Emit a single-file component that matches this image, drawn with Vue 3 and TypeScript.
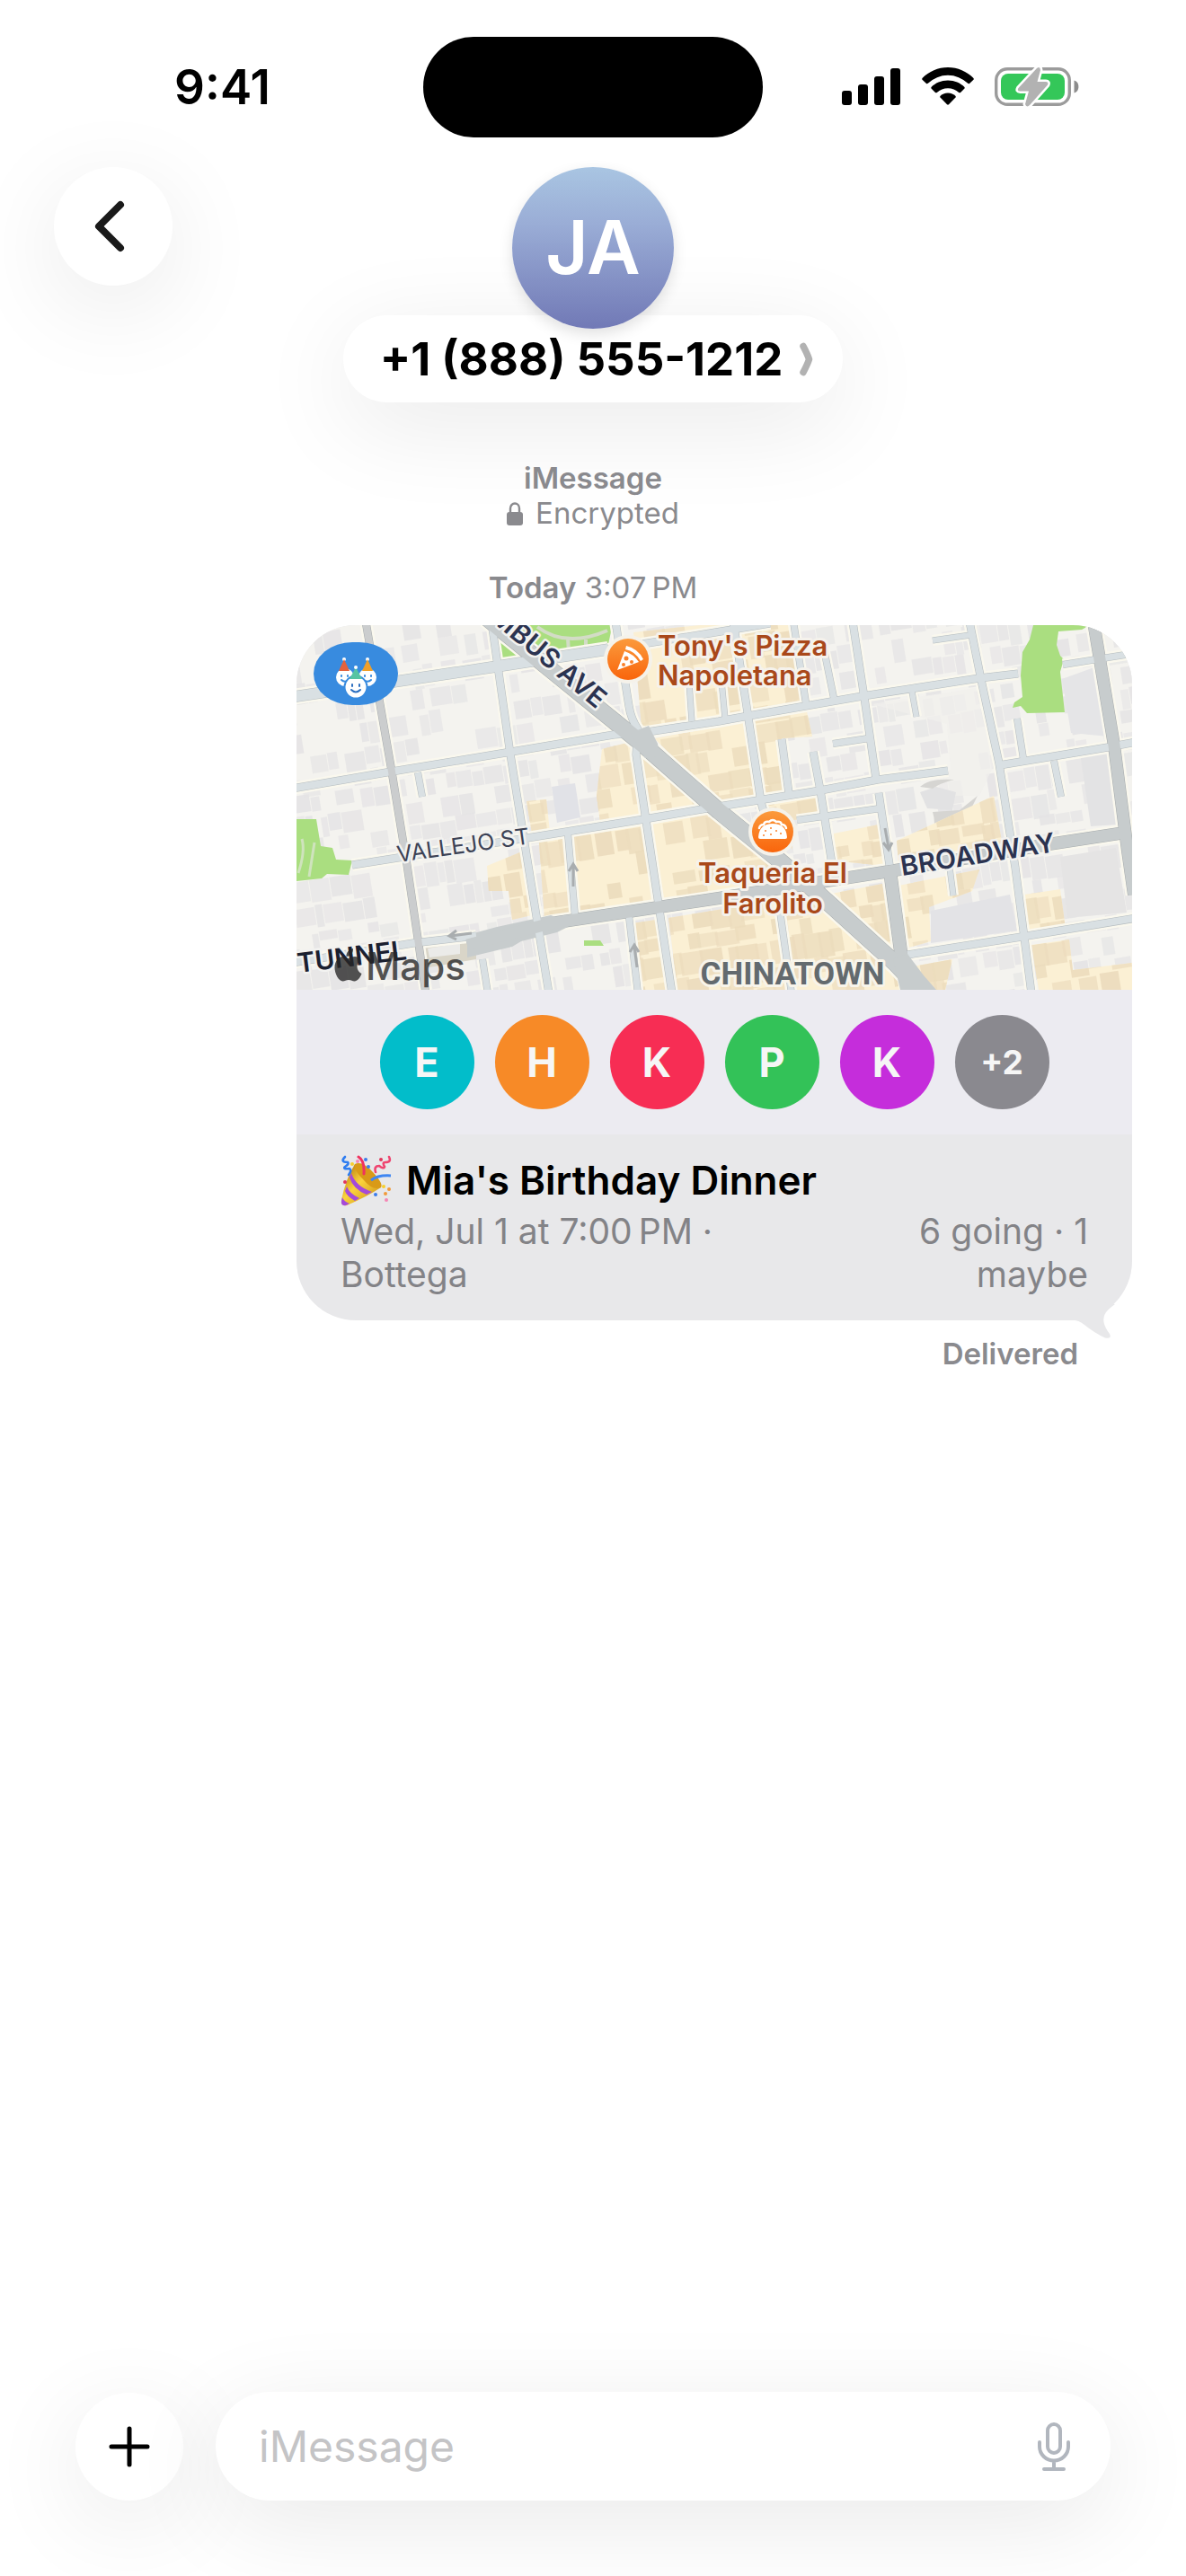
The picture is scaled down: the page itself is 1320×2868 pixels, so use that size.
<script setup lang="ts">
interface Guest {
  label: string
  color: string
  more?: boolean
}

interface Road {
  d: string
  w: number
  tone: 'light' | 'mid' | 'main'
}

interface Lot {
  x: number
  y: number
  w: number
  h: number
  shade: number
}

const guests: Guest[] = [
  { label: 'E', color: '#02bdca' },
  { label: 'H', color: '#f78a27' },
  { label: 'K', color: '#f72d54' },
  { label: 'P', color: '#33c258' },
  { label: 'K', color: '#c52ddb' },
  { label: '+2', color: '#8a898f', more: true },
]

const roads: Road[] = [
  { d: 'M347 27 L460 9 L527 -2', w: 8, tone: 'light' },
  { d: 'M-5 182 L100 164 L233 142 L353 122 L390 119 L470 107 L503 101 L630 79 L760 59 L803 54', w: 8, tone: 'light' },
  { d: 'M853 44 L935 31', w: 7, tone: 'light' },
  { d: 'M62 267 L113 259 L263 236 L387 216 L457 204 L520 194 L583 184 L647 172 L725 162', w: 8, tone: 'light' },
  { d: 'M782 156 L903 136 L935 130', w: 8, tone: 'light' },
  { d: 'M-5 376 L130 354 L200 346', w: 8, tone: 'light' },
  { d: 'M597 132 L637 126', w: 7, tone: 'light' },
  { d: 'M557 217 L650 204', w: 7, tone: 'light' },
  { d: 'M680 367 L807 347 L935 326', w: 8, tone: 'light' },
  { d: 'M708 17 L750 11', w: 6, tone: 'light' },
  { d: 'M217 -4 L238 144 L267 324 L281 410', w: 8, tone: 'light' },
  { d: 'M355 -4 L370 90 Q372 104 380 116 L378 144 L403 311 L418 410', w: 8, tone: 'light' },
  { d: 'M437 64 L440 107', w: 6, tone: 'light' },
  { d: 'M473 62 L477 104', w: 6, tone: 'light' },
  { d: 'M486 -4 L500 84 L517 197 L522 215', w: 8, tone: 'light' },
  { d: 'M553 -4 L567 87', w: 7, tone: 'light' },
  { d: 'M587 27 L598 81', w: 7, tone: 'light' },
  { d: 'M619 -4 L632 81 L645 171', w: 8, tone: 'light' },
  { d: 'M540 127 L548 187', w: 8, tone: 'light' },
  { d: 'M575 141 L583 184 L596 266', w: 8, tone: 'light' },
  { d: 'M648 187 L660 267', w: 8, tone: 'light' },
  { d: 'M749 -4 L762 61 L782 154 L800 270 L818 410', w: 8, tone: 'light' },
  { d: 'M685 74 L690 102', w: 6, tone: 'light' },
  { d: 'M802 104 L809 149', w: 7, tone: 'light' },
  { d: 'M843 151 L851 191', w: 7, tone: 'light' },
  { d: 'M727 270 L731 301', w: 6, tone: 'light' },
  { d: 'M135 164 L140 191', w: 7, tone: 'light' },
  { d: 'M302 232 L310 324', w: 7, tone: 'light' },
  { d: 'M370 324 L380 410', w: 7, tone: 'light' },
  { d: 'M207 372 L213 410', w: 7, tone: 'light' },
  { d: 'M538 318 L551 410', w: 7, tone: 'light' },
  { d: 'M-5 80 L223 46 L347 27', w: 12, tone: 'light' },
  { d: 'M77 -4 L105 157 L123 267 L144 410', w: 8, tone: 'mid' },
  { d: 'M190 356 L283 332 L403 314 L470 304 L577 287 L660 274 L837 244 L922 231', w: 13, tone: 'main' },
  { d: 'M660 270 L673 367 L682 410', w: 14, tone: 'main' },
  { d: 'M887 -4 L910 134 L925 251 L932 300', w: 13, tone: 'main' },
  { d: 'M212 -8 L387 134 L470 207 L535 260 L583 301 L667 377 L700 412', w: 18, tone: 'main' },
]

const commercial: string[] = [
  '375,8 486,-4 500,96 384,114',
  '494,4 550,-4 564,84 506,94',
  '398,126 498,108 513,192 474,200',
  '508,106 568,96 574,124 540,126 546,186 522,190',
  '340,138 372,130 384,212 338,220 334,190',
  '256,196 278,194 282,230 262,232',
  '270,242 388,222 400,308 276,328',
  '384,148 452,198 393,212',
  '393,222 458,210 570,284 408,308',
  '524,200 578,190 582,212 548,218 552,250',
  '596,262 598,232 648,222 654,268',
  '212,268 256,250 266,322 240,328 236,296 214,296',
  '374,332 400,328 414,406 384,406',
  '414,326 572,300 668,384 676,406 424,406',
  '590,300 652,288 664,366',
  '668,240 776,190 786,246 670,266',
  '670,290 760,272 752,296 704,314 706,352 678,360',
  '810,300 850,294 856,338 814,344',
  '686,380 730,372 722,406 700,406',
  '818,356 860,350 864,384 930,376 930,406 826,406',
]

const noise = (n: number): number => {
  const v = Math.sin(n * 91.17) * 4375.85
  return v - Math.floor(v)
}

const lots: Lot[] = []
let seed = 1
for (let y = -20; y < 580; ) {
  const rowHeight = 16 + Math.round(noise(seed++) * 12)
  for (let x = -90; x < 940; ) {
    const w = 8 + Math.round(noise(seed++) * 16)
    const keep = noise(seed++)
    if (keep > 0.3) {
      lots.push({
        x,
        y: y + Math.round(noise(seed++) * 5),
        w: w - 1,
        h: rowHeight - Math.round(noise(seed++) * 6),
        shade: 0.45 + Math.round(keep * 50) / 100,
      })
    }
    x += w + (noise(seed++) > 0.8 ? 7 : 0)
  }
  y += rowHeight + 2
}
</script>

<template>
  <div class="screen">
    <div class="status">
      <div class="status-time">9:41</div>
      <div class="island"></div>
      <div class="status-icons">
        <svg width="66" height="44" viewBox="0 0 66 44" aria-hidden="true">
          <rect x="0" y="26" width="11" height="16" rx="3" />
          <rect x="18" y="19" width="11" height="23" rx="3" />
          <rect x="36" y="10" width="11" height="32" rx="3" />
          <rect x="54" y="1" width="11" height="41" rx="3" />
        </svg>
        <svg width="58" height="44" viewBox="0 0 58 44" aria-hidden="true">
          <path d="M29 0 C40 0 50 4.500 57.500 12 Q58 13 57.500 13.700 L53 18 Q52 18.500 51.200 17.800 A32 32 0 0 0 6.800 17.800 Q6 18.500 5 18 L.5 13.700 Q0 13 .5 12 C8 4.500 18 0 29 0Z" />
          <path d="M29 14.500 C36.500 14.500 43 17.400 47.500 22 Q48 23 47.500 23.600 L43 28 Q42 28.600 41.200 27.900 A18 18 0 0 0 16.800 27.900 Q16 28.600 15 28 L10.500 23.600 Q10 23 10.500 22 C15 17.400 21.500 14.500 29 14.500Z" />
          <path d="M29 28.500 C32.500 28.500 35.500 29.800 37.600 32 Q38 32.800 37.500 33.400 L30 41.300 Q29 42.200 28 41.300 L20.500 33.400 Q20 32.800 20.400 32 C22.500 29.800 25.500 28.500 29 28.500Z" />
        </svg>
        <svg width="94" height="46" viewBox="0 0 94 46" aria-hidden="true">
          <rect x="1.700" y="2.700" width="81.600" height="39.600" rx="12.500" fill="none" stroke="#9b9b9b" stroke-width="3.400" />
          <rect x="7" y="8" width="71" height="29" rx="8" fill="#34c759" />
          <path d="M88.500 15.500 C95 17 95 28 88.500 29.500Z" fill="#8c8c8c" />
          <path
            d="M47 2 L26.500 24 Q24.500 27.500 28.500 27.500 L38 27.500 L34 42 Q35.500 46.500 39.500 42.500 L59 20.500 Q60.500 17 57 17 L47.500 17 L51 4 Q50.500 -.5 47 2Z"
            fill="#b2b2b2"
            stroke="#fff"
            stroke-width="5"
            stroke-linejoin="round"
            paint-order="stroke"
          />
        </svg>
      </div>
    </div>

    <header class="header">
      <button class="round back" type="button" aria-label="Back">
        <svg width="34" height="58" viewBox="0 0 34 58" fill="none" stroke="#1a1a1a" stroke-width="8" stroke-linecap="round" stroke-linejoin="round" aria-hidden="true">
          <path d="M29 5 L5 29 L29 53" />
        </svg>
      </button>
      <div class="contact">
        <div class="avatar">JA</div>
        <button class="contact-pill" type="button">
          <span>+1 (888) 555-1212</span>
          <svg width="15" height="38" viewBox="0 0 15 38" fill="none" stroke="#b2b2b2" stroke-width="7.500" stroke-linecap="round" stroke-linejoin="round" aria-hidden="true">
            <path d="M4 4.500 Q9 14 10.500 19 Q9 24 4 33.500" />
          </svg>
        </button>
      </div>
    </header>

    <main class="thread">
      <div class="notice">
        <div class="strong">iMessage</div>
        <div class="encrypted">
          <svg width="18" height="26" viewBox="0 0 18 26" aria-hidden="true">
            <path d="M4 12 V7 A5 5.500 0 0 1 14 7 V12" fill="none" stroke="#8a8a8e" stroke-width="2.400" />
            <rect x="0" y="11" width="18" height="15" rx="3" fill="#8a8a8e" />
          </svg>
          <span>Encrypted</span>
        </div>
      </div>
      <div class="stamp"><span class="strong">Today</span> 3:07&#8239;PM</div>

      <article class="bubble">
        <div class="card">
          <svg class="map" viewBox="0 0 930 406" preserveAspectRatio="xMidYMid slice" role="img" aria-label="Map">
            <defs>
              <clipPath id="commercial-area">
                <polygon v-for="(p, i) in commercial" :key="i" :points="p" />
              </clipPath>
              <linearGradient id="pin-fill" x1="0" y1="0" x2="0" y2="1">
                <stop offset="0" stop-color="#fb9a3c" />
                <stop offset="1" stop-color="#f9650c" />
              </linearGradient>
            </defs>
            <rect width="930" height="406" fill="#f4f3ef" />
            <g transform="rotate(-9)" fill="#e5e4e5">
              <rect v-for="(l, i) in lots" :key="i" :x="l.x" :y="l.y" :width="l.w" :height="l.h" :opacity="l.shade" />
            </g>
            <path d="M640 88 L756 70 L776 156 L760 190 L700 190 L728 160 L724 110Z" fill="#f1f0ed" opacity=".7" />
            <polygon points="284,180 310,176 316,214 290,220" fill="#e1e2e7" />
            <polygon points="706,318 794,300 802,340 706,354" fill="#e3e3e6" />
            <polygon points="872,142 902,138 914,222 884,224" fill="#e3e3e4" />
            <polygon points="852,60 896,44 904,124 862,120" fill="#e5e5e7" />
            <polygon points="850,258 912,248 924,320 858,326" fill="#e5e4e4" />
            <polygon points="694,186 712,180 734,186 730,206 702,204" fill="#e2e2e3" />
            <path d="M694 180 Q704 170 732 172 Q716 176 708 182Z M708 208 L738 206 L758 190 L750 206 Q726 220 716 238 L708 236 Q712 220 708 208Z" fill="#d6d5d2" />

            <polygon v-for="(p, i) in commercial" :key="'c' + i" :points="p" fill="#fbf0d4" />
            <g clip-path="url(#commercial-area)">
              <g transform="rotate(-9)" fill="#ecdcbd">
                <rect v-for="(l, i) in lots" :key="i" :x="l.x - 4" :y="l.y - 3" :width="l.w + 4" :height="l.h + 2" :opacity="l.shade" />
              </g>
            </g>

            <g fill="#aade80">
              <polygon points="220,-2 352,-2 346,26 224,40" />
              <polygon points="0,216 22,216 27,246 40,248 44,261 62,262 58,278 34,277 28,282 0,285" />
              <polygon points="820,0 883,0 874,5 848,7 846,22 850,34 854,38 850,52 855,97 813,98 806,90 797,92 799,86 808,80 806,56 808,30 816,16" />
              <polygon points="320,351 338,351 342,357 320,357" />
            </g>
            <path d="M268 2 Q300 26 346 6 M302 14 L303 32 M322 16 L322 30" fill="none" stroke="#d3dcc6" stroke-width="4" />
            <path d="M2 276 Q10 252 6 238 M14 280 L20 242" fill="none" stroke="#cfe3bd" stroke-width="3" />

            <polygon points="138,358 200,348 200,372 142,382" fill="#d9d5c8" />
            <polygon points="146,360 182,354 182,366 148,370" fill="#ebebe9" />

            <g fill="none" stroke-linejoin="round">
              <path v-for="(r, i) in roads" :key="'m' + i" :d="r.d" :stroke-width="r.w + 6" stroke="#faf8ee" />
              <path v-for="(r, i) in roads" :key="'e' + i" :d="r.d" :stroke-width="r.w + 1" :class="['edge', r.tone]" />
              <polygon points="190,345 223,336 283,323 292,326 300,322 302,336 290,342 250,352 240,358 190,370" fill="#c7cccd" stroke="none" />
              <path v-for="(r, i) in roads" :key="'f' + i" :d="r.d" :stroke-width="r.w" :class="['road', r.tone]" />
              <path d="M372 120 L392 112 L402 132 L404 146 L388 148Z M664 372 L680 366 L698 390 L712 406 L672 406Z" class="junction" />
            </g>

            <g fill="none" stroke="#a9adaf" stroke-width="3">
              <path d="M308 291 V267 M303 274 L308 266 L313 274" />
              <path d="M379 381 L376 358 M371 364 L376 356 L381 364" />
              <path d="M195 343 L171 346 M178 340 L170 346 L178 350" />
              <path d="M655 226 L659 248 M653 242 L659 250 L663 242" />
            </g>

            <g class="street">
              <text transform="translate(113 264) rotate(-8)" class="minor">VALLEJO ST</text>
              <text transform="translate(334 94) rotate(40)" text-anchor="end">COLUMBUS AVE</text>
              <text transform="translate(674 279) rotate(-9)">BROADWAY</text>
              <text transform="translate(2 387) rotate(-7)" class="ink">TUNNEL</text>
            </g>
            <text class="district" x="552" y="400" text-anchor="middle">CHINATOWN</text>

            <g class="place">
              <text x="402" y="34">Tony's Pizza</text>
              <text x="402" y="67">Napoletana</text>
              <text x="530" y="287" text-anchor="middle">Taqueria El</text>
              <text x="530" y="321" text-anchor="middle">Farolito</text>
            </g>

            <circle cx="369" cy="38" r="27" fill="#f5f2ea" />
            <circle cx="369" cy="38" r="23" fill="url(#pin-fill)" />
            <path d="M367 23 Q380 26 386 38 L383 40 Q377 29 366 27Z M365 29 Q375 32 381 41 L357 50Z" fill="#fff" />
            <g fill="#f9802a">
              <circle cx="367" cy="37" r="2.500" />
              <circle cx="373" cy="41" r="2" />
              <circle cx="364" cy="44" r="2" />
            </g>
            <circle cx="530" cy="230" r="27" fill="#f5f2ea" />
            <circle cx="530" cy="230" r="23" fill="url(#pin-fill)" />
            <path d="M514 236 Q515 221 530 221 Q545 221 546 236 Q546 238 544 238 H516 Q514 238 514 236Z" fill="#fff" />
            <g fill="none" stroke="#fff" stroke-width="2.500" stroke-linecap="round">
              <path d="M515 226 Q516 222 520 222 Q521 218 526 219 Q530 215 534 219 Q539 218 540 222 Q544 222 545 226" />
            </g>
            <g fill="#f9802a">
              <circle cx="522" cy="229" r="1" />
              <circle cx="528" cy="226" r="1" />
              <circle cx="534" cy="229" r="1" />
              <circle cx="528" cy="233" r="1" />
              <circle cx="539" cy="232" r="1" />
              <circle cx="520" cy="234" r="1" />
            </g>

            <g opacity=".78">
              <path
                d="M63 360 C63.500 365 60 369 55.500 369 C55 364.500 59 360.500 63 360Z M57.500 371 C59.500 371 61.500 369 65 369 C67.500 369 70 370.500 71.500 373 C65.500 377 66.500 385 72.500 388 C71 392.500 67.500 396.500 64.500 396.500 C62 396.500 61.200 395 58 395 C55 395 54 396.500 51.500 396.500 C47 396.500 42.500 388 42.500 381 C42.500 374 47 369 51.500 369 C54.500 369 56 371 57.500 371Z"
                fill="#262626"
              />
              <text class="maps-mark" x="77" y="395">Maps</text>
            </g>

            <rect x="19" y="19" width="94" height="70" rx="43" ry="35" fill="#388bdf" />
            <g fill="#fff">
              <circle cx="54" cy="58" r="10" />
              <circle cx="79" cy="58" r="10" />
              <circle cx="53" cy="38" r="2" />
              <circle cx="79" cy="38" r="2" />
            </g>
            <path d="M53 38 L59 51 H47Z" fill="#e4623c" />
            <path d="M79 38 L85 51 H73Z" fill="#efa02b" />
            <g fill="none" stroke="#388bdf" stroke-width="2" stroke-linecap="round">
              <path d="M50 56 V57 M57 56 V57 M50 61 Q53 64 57 62 M76 56 V57 M83 56 V57 M76 62 Q80 64 83 61" />
            </g>
            <circle cx="66" cy="69" r="12.500" fill="#fff" stroke="#388bdf" stroke-width="2" />
            <path d="M66 47 L73 60 H59Z" fill="#55c4a2" />
            <circle cx="66" cy="47" r="2" fill="#fff" />
            <path d="M62 66 V68 M70 66 V68 M61 72 Q66 77 71 72" fill="none" stroke="#2c6fc0" stroke-width="2" stroke-linecap="round" />
          </svg>

          <ul class="guests">
            <li v-for="(g, i) in guests" :key="i" :class="{ more: g.more }" :style="{ background: g.color }">{{ g.label }}</li>
          </ul>

          <div class="info">
            <h2 class="title">
              <svg width="57" height="57" viewBox="0 0 57 57" role="img" aria-label="Party popper">
                <defs>
                  <linearGradient id="cone" x1="0" y1="0" x2="1" y2="1">
                    <stop offset=".1" stop-color="#b97c10" />
                    <stop offset=".45" stop-color="#fbd33c" />
                    <stop offset="1" stop-color="#c78a12" />
                  </linearGradient>
                </defs>
                <path d="M16 10 Q30 16 45 36 Q30 46 7 56 Q0 57 1 50 Q6 26 16 10Z" fill="url(#cone)" />
                <path d="M16 10 Q24 6 36 19 Q48 32 45 36 Q36 40 26 28 Q14 16 16 10Z" fill="#d99a17" />
                <path d="M12 20 Q17 35 35 41 L29 44 Q14 38 10 25Z M7 35 Q10 43 21 48 L16 51 Q7 46 5 40Z" fill="#a54bd8" />
                <path d="M2 47 Q4 52 10 54 L6 56 Q0 57 1 51Z" fill="#a54bd8" />
                <path d="M5 2 Q-1 8 8 8 Q10 10 5 13 Q2 16 10 15 Q13 17 9 22" fill="none" stroke="#2f7df0" stroke-width="2.600" stroke-linecap="round" />
                <path d="M34 28 Q42 22 56 23" fill="none" stroke="#3f86f2" stroke-width="3" />
                <path d="M20 2 Q27 6 26 21" fill="none" stroke="#f0325f" stroke-width="3" stroke-linecap="round" />
                <path d="M54 2 Q57 8 50 8 Q46 8 49 13 Q48 16 43 12 Q37 12 39 19" fill="none" stroke="#ef4570" stroke-width="2.600" stroke-linecap="round" />
                <g fill="#f587b5">
                  <circle cx="19" cy="7" r="2" />
                  <circle cx="51" cy="50" r="2" />
                </g>
                <g fill="#3b7bea">
                  <circle cx="28" cy="5" r="2" />
                  <circle cx="31" cy="13" r="2" />
                  <circle cx="39" cy="44" r="2" />
                </g>
                <g fill="#f7cf2d">
                  <circle cx="13" cy="10" r="2" />
                  <circle cx="48" cy="35" r="2" />
                </g>
                <g fill="#f19a3a">
                  <circle cx="54" cy="38" r="2" />
                  <circle cx="50" cy="43" r="2" />
                </g>
                <g fill="#e2365b">
                  <circle cx="5" cy="30" r="2" />
                  <circle cx="45" cy="5" r="2" />
                </g>
              </svg>
              <span>Mia's Birthday Dinner</span>
            </h2>
            <div class="meta">
              <p class="when">Wed, Jul 1 at 7:00&#8239;PM · Bottega</p>
              <p class="count">6 going · 1 maybe</p>
            </div>
          </div>
        </div>
        <svg class="tail" width="70" height="60" viewBox="0 0 70 60" aria-hidden="true">
          <path d="M10 30 Q20 29 27 35 Q38 44 50 49.500 Q58 51 55 45 Q44 31 51 21 Q54 17 61 12 L20 5Z" fill="#e8e8ea" />
        </svg>
      </article>
      <div class="receipt strong">Delivered</div>
    </main>

    <form class="composer" @submit.prevent>
      <button class="round add" type="button" aria-label="Add">
        <svg width="46" height="46" viewBox="0 0 46 46" stroke="#000" stroke-width="5" stroke-linecap="round" aria-hidden="true">
          <path d="M23 3 V43 M3 23 H43" />
        </svg>
      </button>
      <div class="field">
        <input type="text" placeholder="iMessage" aria-label="iMessage" />
        <button class="mic" type="button" aria-label="Dictate">
          <svg width="36" height="54" viewBox="0 0 36 54" fill="none" stroke="#b1b6be" stroke-width="4" stroke-linecap="round" aria-hidden="true">
            <rect x="11" y="2" width="14" height="32" rx="7" />
            <path d="M2 22 V27 A16 15.500 0 0 0 34 27 V22 M18 43 V51 M7 52 H29" />
          </svg>
        </button>
      </div>
    </form>
  </div>
</template>

<style>
body {
  background: #fff;
}
</style>

<style scoped>
.screen {
  --shadow: 0 24px 108px rgba(0, 0, 0, 0.09);
  display: flex;
  flex-direction: column;
  box-sizing: border-box;
  min-height: 100vh;
  overflow: hidden;
  font-family: Inter, "Liberation Sans", sans-serif;
  color: #000;
}

button {
  border: 0;
  padding: 0;
  background: none;
  font: inherit;
  color: inherit;
}

svg {
  display: block;
  flex: none;
}

.status {
  display: grid;
  grid-template-columns: 1fr 378px 1fr;
  align-items: center;
  padding: 41px 0 33px;
}

.status-time {
  padding-left: 24px;
  text-align: center;
  font-size: 53px;
  line-height: 112px;
  font-weight: 600;
}

.island {
  height: 112px;
  border-radius: 56px;
  background: #000;
}

.status-icons {
  display: flex;
  justify-content: center;
  align-items: center;
  gap: 23px;
  padding-right: 32px;
}

.header {
  display: grid;
  grid-template-columns: 1fr auto 1fr;
  align-items: start;
  padding: 0 60px;
}

.round {
  display: flex;
  align-items: center;
  justify-content: center;
  flex: none;
  border-radius: 50%;
  background: #fff;
  box-shadow: var(--shadow);
}

.back {
  width: 132px;
  height: 132px;
}

.back svg {
  margin-right: 8px;
}

.contact {
  display: flex;
  flex-direction: column;
  align-items: center;
}

.avatar {
  z-index: 1;
  width: 180px;
  height: 180px;
  border-radius: 50%;
  background: linear-gradient(#a9c5e2, #9aadd6 35%, #7179b6);
  box-shadow: 0 6px 16px rgba(0, 0, 0, 0.12);
  color: #fff;
  text-align: center;
  font-size: 82px;
  line-height: 180px;
  font-weight: 600;
}

.contact-pill {
  display: flex;
  align-items: center;
  gap: 19px;
  margin-top: -15px;
  padding: 0 33px 0 41px;
  border-radius: 49px;
  background: #fff;
  box-shadow: var(--shadow);
  font-size: 51px;
  line-height: 97px;
  font-weight: 700;
}

.thread {
  display: flex;
  flex-direction: column;
  padding: 65px 60px 0;
}

.notice,
.stamp,
.receipt {
  color: #8a8a8e;
  font-size: 33px;
  line-height: 39px;
  text-align: center;
}

.strong {
  font-weight: 600;
}

.encrypted {
  display: flex;
  align-items: center;
  justify-content: center;
  gap: 14px;
}

.stamp {
  margin: 44px 0 22px;
}

.bubble {
  position: relative;
  align-self: flex-end;
  width: 100%;
  max-width: 930px;
}

.card {
  overflow: hidden;
  border-radius: 66px;
  background: #e8e8ea;
}

.map {
  width: 100%;
  height: 406px;
}

.edge.light {
  stroke: #b4bbbe;
}

.edge.mid,
.edge.main {
  stroke: #a6abad;
}

.road.light {
  stroke: #d9e0e3;
}

.road.mid {
  stroke: #cbcdce;
}

.road.main {
  stroke: #c7cccd;
}

.junction {
  fill: #c7cccd;
}

.map text {
  paint-order: stroke;
  stroke-linejoin: round;
}

.street text {
  fill: #2b3350;
  stroke: #f2f2f0;
  stroke-width: 5px;
  font-size: 30px;
  font-weight: 600;
}

.street .minor {
  font-size: 25px;
  font-weight: 400;
  fill: #3c4255;
}

.street .ink {
  fill: #1b2030;
}

.district {
  fill: #636a6e;
  stroke: #f7f4ea;
  stroke-width: 6px;
  font-family: Roboto, "Liberation Sans", sans-serif;
  font-size: 35px;
  font-weight: 700;
}

.place text {
  fill: #a9481a;
  stroke: #f5f2ec;
  stroke-width: 6px;
  font-size: 31px;
  font-weight: 600;
}

.maps-mark {
  fill: #262626;
  font-size: 42px;
  font-weight: 500;
}

.guests {
  display: flex;
  justify-content: center;
  gap: 23px;
  margin: 0;
  padding: 28px 0;
  background: #ecebf1;
  list-style: none;
}

.guests li {
  width: 105px;
  height: 105px;
  border-radius: 50%;
  color: #f6f6f6;
  text-align: center;
  font-size: 45px;
  line-height: 105px;
  font-weight: 700;
}

.guests .more {
  font-size: 37px;
}

.info {
  padding: 21px 49px 27px;
}

.title {
  display: flex;
  align-items: center;
  gap: 16px;
  margin: 0 0 3px;
  font-size: 44px;
  line-height: 60px;
  font-weight: 600;
}

.meta {
  display: flex;
  justify-content: space-between;
  color: #838387;
  font-size: 39px;
  line-height: 48px;
}

.meta p {
  margin: 0;
}

.when {
  max-width: 450px;
}

.count {
  max-width: 220px;
  text-align: right;
}

.tail {
  position: absolute;
  right: 10px;
  bottom: -30px;
}

.receipt {
  margin-top: 18px;
  padding-right: 60px;
  text-align: right;
}

.composer {
  display: flex;
  align-items: center;
  gap: 36px;
  margin-top: auto;
  padding: 0 84px 84px;
}

.add {
  width: 120px;
  height: 120px;
}

.field {
  display: flex;
  align-items: center;
  flex: 1;
  box-sizing: border-box;
  height: 121px;
  padding: 0 45px 0 48px;
  border-radius: 61px;
  background: #fff;
  box-shadow: var(--shadow);
}

.field input {
  flex: 1;
  min-width: 0;
  border: 0;
  padding: 0;
  outline: 0;
  background: none;
  font: inherit;
  font-size: 48px;
  line-height: 60px;
}

.field input::placeholder {
  color: #c4c4c6;
  opacity: 1;
}
</style>
